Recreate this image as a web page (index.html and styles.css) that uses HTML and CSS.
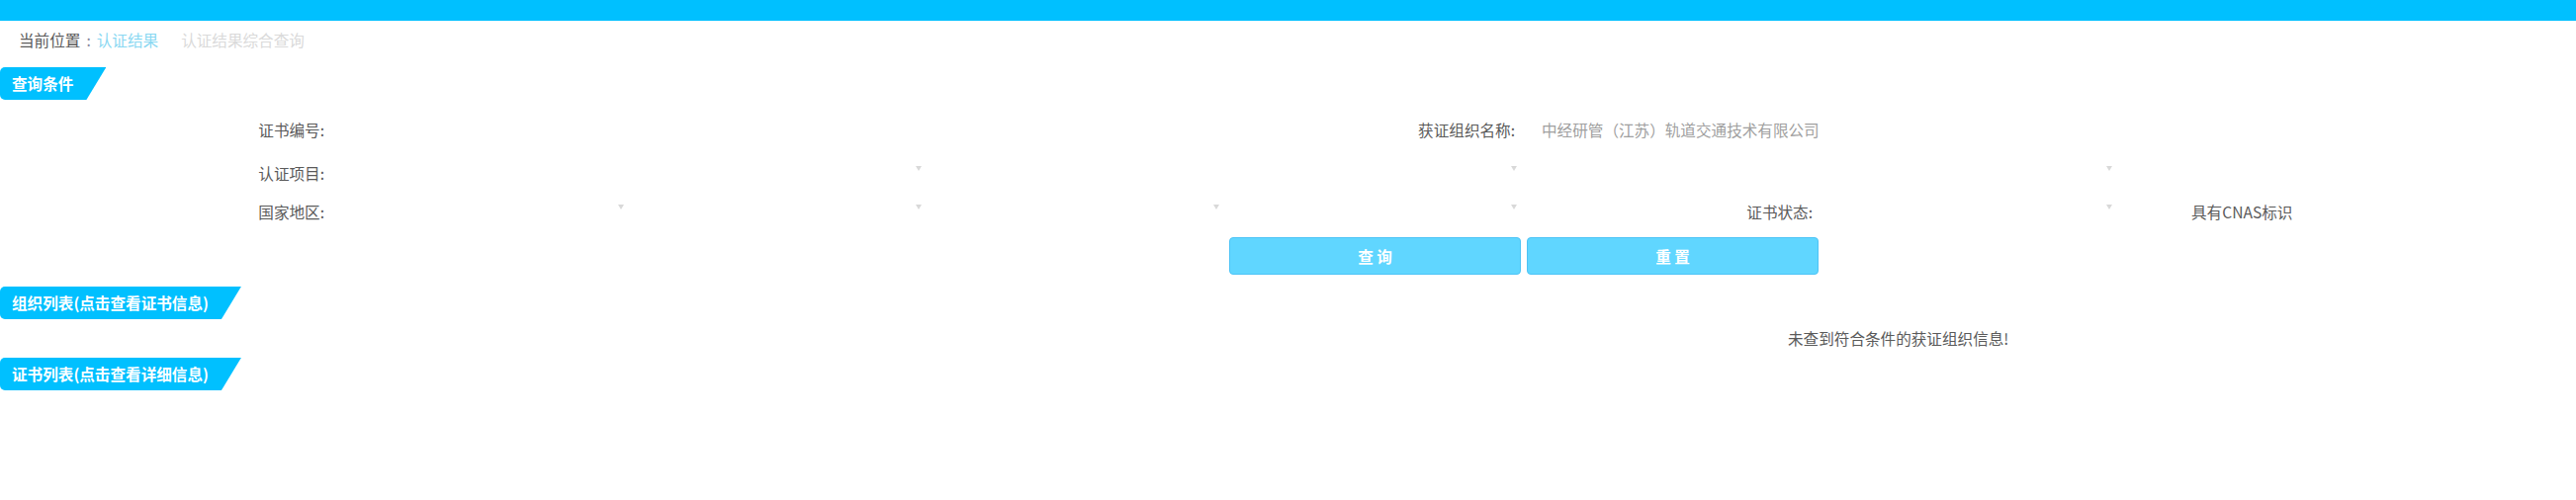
FILE: index.html
```html
<!DOCTYPE html>
<html lang="zh-CN">
<head>
    <meta charset="UTF-8">
    <meta name="viewport" content="width=device-width, initial-scale=1.0">
    <title>认证结果综合查询</title>
    <link rel="stylesheet" href="styles.css">
</head>

<body>
    <div class="top-bar"></div>

    <div class="crumb">
        <span>当前位置</span><span class="crumb-sep">:</span><a class="crumb-link" href="#">认证结果</a><span class="crumb-arrow"></span><span class="crumb-current">认证结果综合查询</span>
    </div>

    <div class="section-title">查询条件</div>

    <form class="query-form" id="queryForm">
        <div class="form-row row-1">
            <label class="form-label" for="certNo">证书编号:</label>
            <div class="field span-3"><input type="text" id="certNo" name="certNo"></div>
            <label class="form-label" for="orgName">获证组织名称:</label>
            <div class="field span-2"><input type="text" id="orgName" name="orgName" class="org-input" value="中经研管（江苏）轨道交通技术有限公司"></div>
        </div>

        <div class="form-row row-2">
            <label class="form-label">认证项目:</label>
            <div class="field select-box span-2"><select name="item1"></select><span class="caret"></span></div>
            <div class="field select-box span-2"><select name="item2"></select><span class="caret"></span></div>
            <div class="field select-box span-2"><select name="item3"></select><span class="caret"></span></div>
        </div>

        <div class="form-row row-3">
            <label class="form-label">国家地区:</label>
            <div class="field select-box"><select name="area1"></select><span class="caret"></span></div>
            <div class="field select-box"><select name="area2"></select><span class="caret"></span></div>
            <div class="field select-box"><select name="area3"></select><span class="caret"></span></div>
            <div class="field select-box"><select name="area4"></select><span class="caret"></span></div>
            <label class="form-label">证书状态:</label>
            <div class="field select-box"><select name="status"></select><span class="caret"></span></div>
            <label class="cnas-check"><input type="checkbox" name="cnas">具有CNAS标识</label>
        </div>

        <div class="form-row row-buttons">
            <button type="button" class="btn btn-search">查 询</button>
            <button type="reset" class="btn">重 置</button>
        </div>
    </form>

    <div class="section-title section-gap">组织列表(点击查看证书信息)</div>
    <div class="empty-message">未查到符合条件的获证组织信息!</div>

    <div class="section-title list-title">证书列表(点击查看详细信息)</div>
</body>

</html>
```

FILE: styles.css
```css
body {
    margin: 0;
    font-family: "Noto Sans CJK SC", "Noto Sans", sans-serif;
    font-size: 15.6px;
    color: #5a5a5a;
    background-color: #fff;
}

.top-bar {
    height: 21px;
    background-color: #00c0ff;
}

/* breadcrumb */
.crumb {
    height: 24px;
    line-height: 24px;
    margin-top: 7px;
    padding-left: 19px;
}

.crumb-sep {
    margin: 0 6px;
    color: #8a8aa0;
}

.crumb-link {
    color: #8ad8f2;
    text-decoration: none;
}

.crumb-arrow {
    display: inline-block;
    width: 23px;
}

.crumb-current {
    color: #dadada;
}

/* section headers */
.section-title {
    width: max-content;
    height: 33px;
    line-height: 33px;
    margin-top: 16px;
    padding: 0 33px 0 12px;
    background-color: #00c0ff;
    color: #fff;
    font-weight: bold;
    border-radius: 5px 0 0 5px;
    clip-path: polygon(0 0, 100% 0, calc(100% - 20px) 100%, 0 100%);
}

.section-gap {
    margin-top: 12px;
}

.list-title {
    margin-top: 0;
}

/* query form */
.query-form {
    margin-top: 9px;
}

.form-row {
    display: grid;
    grid-template-columns: 337px repeat(7, 301px) 1fr;
    align-items: center;
}

.row-1 {
    height: 42px;
}

.row-2 {
    height: 46px;
}

.row-3 {
    height: 32px;
}

.row-buttons {
    height: 38px;
    margin-top: 10px;
}

.form-label {
    text-align: right;
    padding-right: 9px;
    white-space: nowrap;
}

.field {
    position: relative;
    height: 32px;
}

.span-2 {
    grid-column: span 2;
}

.span-3 {
    grid-column: span 3;
}

.field input,
.field select {
    width: 100%;
    height: 100%;
    box-sizing: border-box;
    border: none;
    outline: none;
    background: transparent;
    font: inherit;
    color: #5a5a5a;
    padding: 0 8px;
    appearance: none;
}

.field .org-input {
    padding-left: 18px;
    color: #a0a0a0;
}

.caret {
    position: absolute;
    right: 7px;
    top: calc(50% - 7px);
    width: 0;
    height: 0;
    border-top: 5px solid #d9d9d9;
    border-left: 3px solid transparent;
    border-right: 3px solid transparent;
}

.cnas-check {
    padding-left: 73px;
    white-space: nowrap;
}

.cnas-check input {
    display: none;
}

.btn {
    height: 38px;
    margin: 0 3px;
    background-color: #60d6ff;
    border: 1px solid #4ec4f6;
    border-radius: 4px;
    color: #fff;
    font: inherit;
    font-weight: bold;
    cursor: pointer;
}

.btn-search {
    grid-column-start: 5;
}

/* result lists */
.empty-message {
    height: 20px;
    line-height: 20px;
    margin: 9px 0 10px;
    padding-left: 1808px;
    white-space: nowrap;
}
```
